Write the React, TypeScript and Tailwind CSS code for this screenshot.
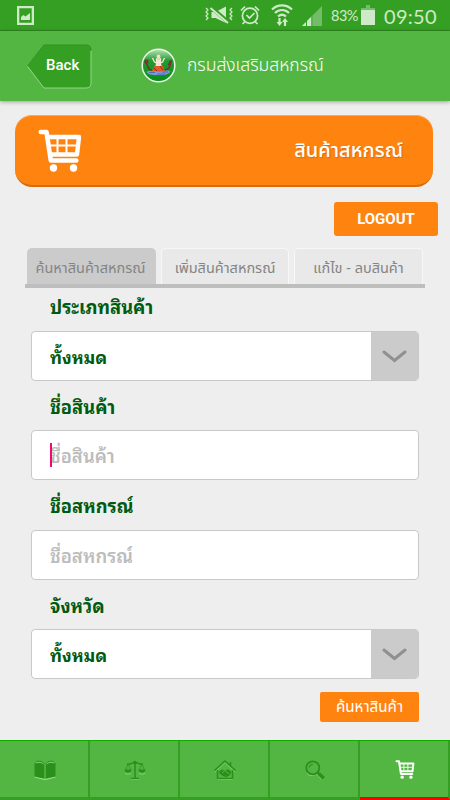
import React from 'react';

const THAI = "font-['Noto_Sans_Thai','Noto_Sans',sans-serif]";
const THAI_LOOPED = "font-['Noto_Sans_Thai_Looped','Loma','Noto_Sans_Thai',sans-serif]";

const NAV_ITEMS = ['book', 'scale', 'house', 'search', 'cart'] as const;

type NavName = (typeof NAV_ITEMS)[number];

const CartIcon: React.FC<{ className: string }> = ({ className }) => (
  <svg viewBox="0 0 44 43" className={className} fill="none" stroke="currentColor" strokeLinecap="round" strokeLinejoin="round">
    <path d="M2.800 3h5.700l4.300 28.500h25.500" strokeWidth="4.600" />
    <path d="M9.500 8h31.500l-2 17.500H12.500" strokeWidth="4.400" />
    <path d="M11 16.500h29M19.500 8v18M28.500 8v18" strokeWidth="2" />
    <circle cx="15.500" cy="39" r="3.700" fill="currentColor" stroke="none" />
    <circle cx="35.500" cy="39" r="3.700" fill="currentColor" stroke="none" />
  </svg>
);

const NavIcon: React.FC<{ name: NavName }> = ({ name }) => {
  if (name === 'cart') return <CartIcon className="w-[20px] h-[19px] text-white" />;
  return (
    <svg viewBox="0 0 22 20" className="w-[22px] h-[20px] text-[#2b8f1b]" fill="none" stroke="currentColor">
      {name === 'book' && (
        <>
          <path d="M.5 17l10.500 2.500L21.500 17" stroke="#a0d996" strokeWidth="1.200" />
          <path d="M.5 3v13.500l9.800 2V4.500L8 3z M21.500 3v13.500l-9.800 2V4.500L14 3z" fill="currentColor" stroke="none" />
          <path d="M2 2c2-1.500 6-1 8.300 2M20 2c-2-1.500-6-1-8.300 2" strokeWidth="1" />
          <path d="M2 3.200c3-1.500 5-1 7.500 1M20 3.200c-3-1.500-5-1-7.500 1" stroke="#a0d996" strokeWidth=".6" />
          <path d="M11 4v15" stroke="#53b643" strokeWidth=".8" />
        </>
      )}
      {name === 'scale' && (
        <>
          <path d="M7 19.500h8.500M1 13c1 1.500 5 1.500 6 0M15 13c1 1.500 5 1.500 6 0" stroke="#8bd07e" />
          <path d="M11 1v17M3 4c3 1 5-1.500 8-1.500S16 5 19 4M7 18.500h8" strokeWidth="1.500" />
          <path d="M4 4L1.500 10M4 4l3 6M18 4l-3 6M18 4l2.500 6" strokeWidth=".7" />
          <path d="M.5 9.500h7c0 4.300-7 4.300-7 0zM14.500 9.500h7c0 4.300-7 4.300-7 0z" fill="currentColor" stroke="none" />
          <circle cx="11" cy="2.500" r="1.800" fill="currentColor" stroke="none" />
        </>
      )}
      {name === 'house' && (
        <>
          <path d="M3.500 19.500h15.500M1 12l10-9.500L21 12" stroke="#8bd07e" />
          <path d="M.5 10.500L11 1l10.500 9.500M3.500 10v8.500h15V10M16.500 2v4" strokeWidth="1.500" />
          <path d="M4.500 12l3.500-2.500 3 1 3-1.200 3.500 2.700-2 3.500-3.500 1.800-5-2.300z" fill="currentColor" stroke="none" />
          <path d="M8 13l3-2.500 4 3.500" stroke="#63bf54" strokeWidth=".8" />
        </>
      )}
      {name === 'search' && (
        <>
          <path d="M3 13c2 3 6 3.500 9 .8l5.500 5.500" stroke="#8bd07e" strokeWidth="1" />
          <circle cx="8.800" cy="7.800" r="6.500" strokeWidth="1.800" />
          <path d="M5.300 7.500c.3-2 1.700-3 3.500-3.200" strokeWidth="1.100" />
          <path d="M13.300 12.300l2 2" strokeWidth="2" />
          <path d="M14.700 13.500l5 4.700" strokeWidth="3.600" />
        </>
      )}
    </svg>
  );
};

const StatusBar = () => (
  <div className="h-[31px] bg-[#359f23] border-b border-[#2c8a1c] flex items-center text-[#cfeac9]">
    <svg className="ml-[17px] mt-[1px] w-[17px] h-[19px]" viewBox="0 0 17 19">
      <path d="M0 0h17v19H0zM2.300 2.300v14.400h12.400V2.300z" fill="currentColor" fillRule="evenodd" />
      <path d="M4 14v-3l2.500-2 2 1.500L13 7v7z" fill="currentColor" />
    </svg>
    <svg className="ml-[171px] w-[29px] h-[20px]" viewBox="0 0 29 20" fill="none" stroke="currentColor">
      <path d="M1 3l2 2-2 2 2 2-2 2 2 2-2 2M27 3l-2 2 2 2-2 2 2 2-2 2 2 2" strokeWidth="1.200" />
      <path d="M6.500 7h4L21 1.500v16.500L10.500 13h-4z" fill="currentColor" stroke="none" />
      <path d="M5 1.500l20 17" stroke="#359f23" strokeWidth="4" />
      <path d="M5.500 3l17.500 15" strokeWidth="1.900" />
    </svg>
    <svg className="ml-[6px] w-[20px] h-[20px]" viewBox="0 0 20 20" fill="none" stroke="currentColor" strokeWidth="1.700">
      <circle cx="10" cy="10.800" r="7.600" />
      <path d="M1 5.500l4-4M19 5.500l-4-4M5 16.500l-2.500 2.500M15 16.500l2.500 2.500M6.500 10l3 3 5-5" />
    </svg>
    <svg className="ml-[11px] w-[22px] h-[23px]" viewBox="0 0 22 23" fill="none" stroke="currentColor" strokeWidth="2.200">
      <path d="M1 5.500c5.500-5.500 14.500-5.500 20 0M4 9c4-4 10-4 14 0M7 12.500c2.500-2.200 5.500-2.200 8 0" />
      <path d="M8.500 14v5M14 22v-5" />
      <path d="M5.500 18h6l-3 4zM11 18h6l-3-4z" fill="currentColor" stroke="none" />
    </svg>
    <svg className="ml-[9px] mt-[1px] w-[20px] h-[20px]" viewBox="0 0 20 20">
      <path d="M0 20L20 0v20z" fill="#74bd68" />
      <path d="M0 20l10-10v10z" fill="currentColor" />
      <path d="M4.500 15v5M9.800 10v10" stroke="#359f23" />
    </svg>
    <span className="ml-[9px] w-[28px] pt-[2px] text-[14.500px] font-['Lato',sans-serif] tracking-[-0.5px] whitespace-nowrap">83%</span>
    <svg className="ml-[2px] w-[14px] h-[20px]" viewBox="0 0 14 20">
      <path d="M5 0h4v3h5v3H0V3h5z" fill="#74bd68" />
      <path d="M0 5h14v15H0z" fill="currentColor" />
    </svg>
    <span className="ml-[9px] w-[54px] pt-[1px] text-[20px] font-['Lato',sans-serif] tracking-[0.3px] whitespace-nowrap">09:50</span>
  </div>
);

const Emblem = () => (
  <svg className="absolute left-[141px] top-[17px] w-[35px] h-[35px]" viewBox="0 0 35 35">
    <defs>
      <linearGradient id="emblem" x1="0" y1="0" x2="0" y2="1">
        <stop offset="0" stopColor="#b9e5b6" />
        <stop offset=".35" stopColor="#229c33" />
        <stop offset="1" stopColor="#058c16" />
      </linearGradient>
    </defs>
    <circle cx="17.500" cy="17.500" r="16.300" fill="url(#emblem)" stroke="#e9f6e6" strokeWidth="1.500" />
    <path d="M5.500 24c2-2 5 0 7-1 3-1 6 1 8 0 3-1 6-1 9 .5-2 3-6 3.500-12 3.500S7.500 27 5.500 24z" fill="#8297da" />
    <path d="M8 24.500h6m2 1.500h8m-3-2h6" stroke="#506bbd" />
    <path d="M11 22c-5 0-3-5-7-8 1-3 4-2 2 1M23 22c6 0 6-4 7-9-3 1 0 3-3 4" fill="none" stroke="#7c302c" strokeWidth="1.600" />
    <path d="M11 23l3-6h7l3 5.500-6 1z" fill="#e05a25" />
    <path d="M11.500 10l2 4 2 1v-4h4v4l2-1 2-4" fill="none" stroke="#f7eed2" strokeWidth="1.300" />
    <circle cx="17.500" cy="8.500" r="1.900" fill="#f3dfc5" />
    <path d="M15.500 12h4l1 6h-6z" fill="#f2e5d5" />
    <path d="M13 20l3 3m3-5l3 4" stroke="#9f201b" />
  </svg>
);

const Header = () => (
  <header className="relative h-[70px] bg-[#53b643] shadow-[0_1px_4px_rgba(0,0,0,0.35)]">
    <svg className="absolute left-[26px] top-[12px] w-[66px] h-[46px]" viewBox="0 0 66 46">
      <path d="M18 2h42q5 0 5 5v33q0 5-5 5H18L2 23z" fill="#359f23" />
      <path d="M1.500 23L18 2h42q5 0 5 5" fill="none" stroke="#2e931d" />
      <path d="M1.500 23.500L18 45h42q5 0 5-5V8" fill="none" stroke="#95d48a" />
    </svg>
    <span className="absolute left-[46px] top-[24px] text-[15px] leading-[20px] font-medium text-white font-['Roboto',sans-serif]">Back</span>
    <Emblem />
    <h1 className={`absolute left-[187px] top-[20px] leading-[30px] text-[17.500px] font-light text-white whitespace-nowrap ${THAI}`}>กรมส่งเสริมสหกรณ์</h1>
  </header>
);

const FieldLabel: React.FC<{ text: string; className: string }> = ({ text, className }) => (
  <div className={`flex items-center pl-[19px] text-[18.300px] font-bold text-[#005a10] whitespace-nowrap ${THAI_LOOPED} ${className}`}>{text}</div>
);

const SelectBox: React.FC<{ value: string }> = ({ value }) => (
  <div className={`h-[50px] flex rounded-[4px] border border-[#c8c8c8] bg-white overflow-hidden ${THAI_LOOPED}`}>
    <span className="flex-1 flex items-center pl-[18px] text-[17.500px] font-bold text-[#005a10]">{value}</span>
    <span className="w-[47px] bg-[#cbcbcb] flex items-center justify-center">
      <svg className="w-[25px] h-[13px]" viewBox="0 0 25 13" fill="none" stroke="#909090" strokeWidth="3" strokeLinecap="round">
        <path d="M2 2l10.500 8.500L23 2" />
      </svg>
    </span>
  </div>
);

const InputBox: React.FC<{ placeholder: string; focused?: boolean }> = ({ placeholder, focused }) => (
  <div className={`relative h-[50px] flex items-center rounded-[4px] border border-[#c8c8c8] bg-white pl-[18px] text-[18.500px] font-semibold text-[#bcbcbc] ${THAI_LOOPED}`}>
    {focused && <i className="absolute left-[18px] top-[12px] w-[2px] h-[24px] bg-[#f5086d]" />}
    {placeholder}
  </div>
);

export default function App() {
  return (
    <div className="w-[450px] h-[800px] bg-[#eeeeee] overflow-hidden flex flex-col">
      <StatusBar />
      <Header />

      <main className="flex-1">
        <div className="mt-[14px] ml-[15px] w-[418px] h-[72px] rounded-[17px] bg-[#ff830f] border-t border-b-2 border-t-[#ffa65a] border-b-[#d96c08] flex items-center justify-between pl-[23px] pr-[30px]">
          <CartIcon className="w-[44px] h-[43px] text-white" />
          <span className={`text-[20px] font-medium text-white whitespace-nowrap [text-shadow:1px_1px_1px_rgba(150,70,0,0.35)] ${THAI}`}>สินค้าสหกรณ์</span>
        </div>

        <button className="block mt-[15px] ml-[334px] w-[104px] h-[34px] rounded-[3px] bg-[#ff830f] text-white text-[15px] font-bold font-['Roboto',sans-serif]">LOGOUT</button>

        {/* Tabs */}
        <div className={`mt-[12px] ml-[25px] w-[400px] h-[40px] pl-[2px] flex gap-[5px] border-b-4 border-[#bebebe] text-[14.500px] text-[#858585] whitespace-nowrap ${THAI}`}>
          <div className="w-[129px] rounded-t-[5px] bg-[#cbcbcb] flex items-center justify-center pt-[7px] pr-[2px]">ค้นหาสินค้าสหกรณ์</div>
          <div className="w-[128px] rounded-t-[5px] bg-[#e9e9e9] border border-b-0 border-[#f7f7f7] flex items-center justify-center pt-[6px]">เพิ่มสินค้าสหกรณ์</div>
          <div className="w-[129px] rounded-t-[5px] bg-[#e9e9e9] border border-b-0 border-[#f7f7f7] flex items-center justify-center pt-[6px]">แก้ไข - ลบสินค้า</div>
        </div>

        <div className="ml-[31px] w-[388px]">
          <FieldLabel text="ประเภทสินค้า" className="h-[43px] pb-[7px]" />
          <SelectBox value="ทั้งหมด" />
          <FieldLabel text="ชื่อสินค้า" className="h-[49px]" />
          <InputBox placeholder="ชื่อสินค้า" focused />
          <FieldLabel text="ชื่อสหกรณ์" className="h-[50px]" />
          <InputBox placeholder="ชื่อสหกรณ์" />
          <FieldLabel text="จังหวัด" className="h-[49px]" />
          <SelectBox value="ทั้งหมด" />
          <button className={`block mt-[13px] ml-auto w-[99px] h-[30px] pt-[2px] rounded-[2px] bg-[#ff830f] text-white text-[15.200px] whitespace-nowrap ${THAI}`}>ค้นหาสินค้า</button>
        </div>
      </main>

      <nav className="h-[60px] grid grid-cols-5 bg-[#53b643] border-t border-[#12a800]">
        {NAV_ITEMS.map((name) => (
          <div
            key={name}
            className={`border-r-2 border-r-[#359f23] border-b-[3px] flex items-center justify-center pt-[1px] pl-[2px] ${name === 'cart' ? 'border-b-[#ff0000]' : 'border-b-[#359f23]'}`}
          >
            <NavIcon name={name} />
          </div>
        ))}
      </nav>
    </div>
  );
}
